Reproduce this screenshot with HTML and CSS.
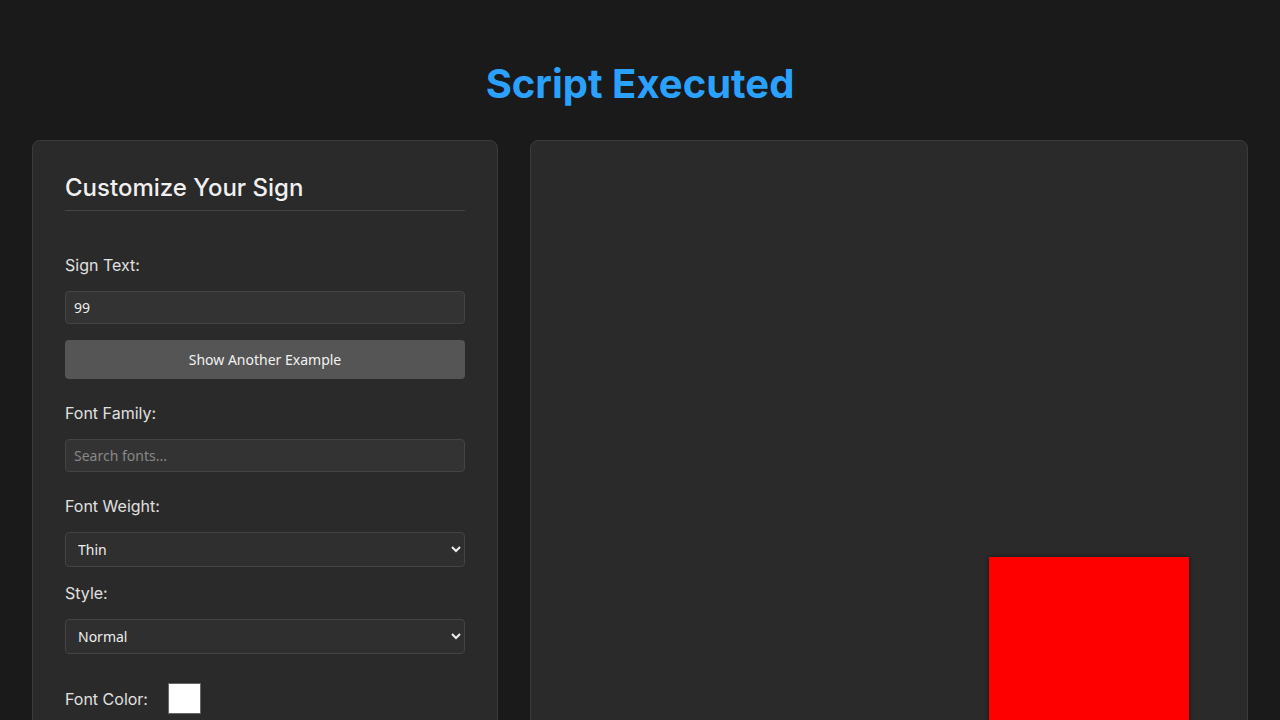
FILE: index.html
```html
<!DOCTYPE html>
<html lang="en">
<head>
<meta charset="utf-8">
<title>Script Executed</title>
<link rel="stylesheet" href="styles.css">
</head>
<body>
<h1 class="title">Script Executed</h1>
<main class="layout">
  <section class="card controls">
    <h2 class="card-title">Customize Your Sign</h2>
    <div class="group first">
      <label class="label">Sign Text:</label>
      <input class="field" type="text" value="99">
      <button class="btn">Show Another Example</button>
    </div>
    <div class="group">
      <label class="label">Font Family:</label>
      <input class="field" type="text" placeholder="Search fonts...">
    </div>
    <div class="group">
      <label class="label">Font Weight:</label>
      <select class="select"><option>Thin</option></select>
    </div>
    <div class="group tight">
      <label class="label">Style:</label>
      <select class="select"><option>Normal</option></select>
    </div>
    <div class="group color-row">
      <label class="label inline">Font Color:</label>
      <span class="swatch"></span>
    </div>
  </section>
  <section class="card preview">
    <div class="sign"></div>
  </section>
</main>
</body>
</html>
```
FILE: styles.css
```css
* { box-sizing: border-box; }
html, body { height: 100%; }
body {
  margin: 0;
  padding: 0 32px;
  background: #1a1a1a;
  font-family: Inter, "Noto Sans", sans-serif;
  color: #e6e6e6;
  overflow: hidden;
}
.title {
  margin: 60px 0 32px;
  font-size: 40px;
  line-height: 48px;
  font-weight: 700;
  text-align: center;
  color: #2aa1ff;
}
.layout {
  display: grid;
  grid-template-columns: 466px 1fr;
  gap: 32px;
  align-items: start;
}
.card {
  background: #2a2a2a;
  border: 1px solid #3b3b3b;
  border-radius: 8px;
  height: 700px;
}
.controls {
  padding: 32px;
}
.card-title {
  margin: 0;
  font-size: 24px;
  line-height: 29px;
  font-weight: 500;
  color: #f0f0f0;
  padding-bottom: 8px;
  border-bottom: 1px solid #444;
}
.group { margin-top: 24px; }
.group.first { margin-top: 44px; }
.group.tight { margin-top: 16px; }
.label {
  display: block;
  font-size: 16px;
  line-height: 20px;
  color: #e0e0e0;
  margin-bottom: 16px;
}
.field {
  display: block;
  width: 100%;
  height: 33px;
  padding: 0 8px 1px;
  background: #333;
  border: 1px solid #444;
  border-radius: 4px;
  color: #eee;
  font-family: "Noto Sans", sans-serif;
  font-size: 14px;
  outline: none;
}
.field::placeholder { color: #888; }
.btn {
  display: block;
  width: 100%;
  height: 39px;
  margin-top: 16px;
  padding-bottom: 1px;
  background: #555;
  border: none;
  border-radius: 4px;
  color: #f2f2f2;
  font-family: "Noto Sans", sans-serif;
  font-size: 14px;
}
.select {
  display: block;
  width: 100%;
  height: 35px;
  padding: 0 8px;
  background: #2f2f2f;
  border: 1px solid #444;
  border-radius: 4px;
  color: #eee;
  font-family: "Noto Sans", sans-serif;
  font-size: 14px;
  color-scheme: dark;
}
.color-row {
  display: flex;
  align-items: center;
  gap: 20px;
  margin-top: 29px;
}
.label.inline { margin: 0; }
.swatch {
  width: 33px;
  height: 31px;
  background: #fff;
  border: 1px solid #666;
}
.preview {
  display: flex;
  justify-content: flex-end;
  padding: 416px 58px 0 0;
}
.sign {
  width: 200px;
  height: 200px;
  background: #ff0000;
  box-shadow: 0 0 4px rgba(0,0,0,0.5);
}
```
